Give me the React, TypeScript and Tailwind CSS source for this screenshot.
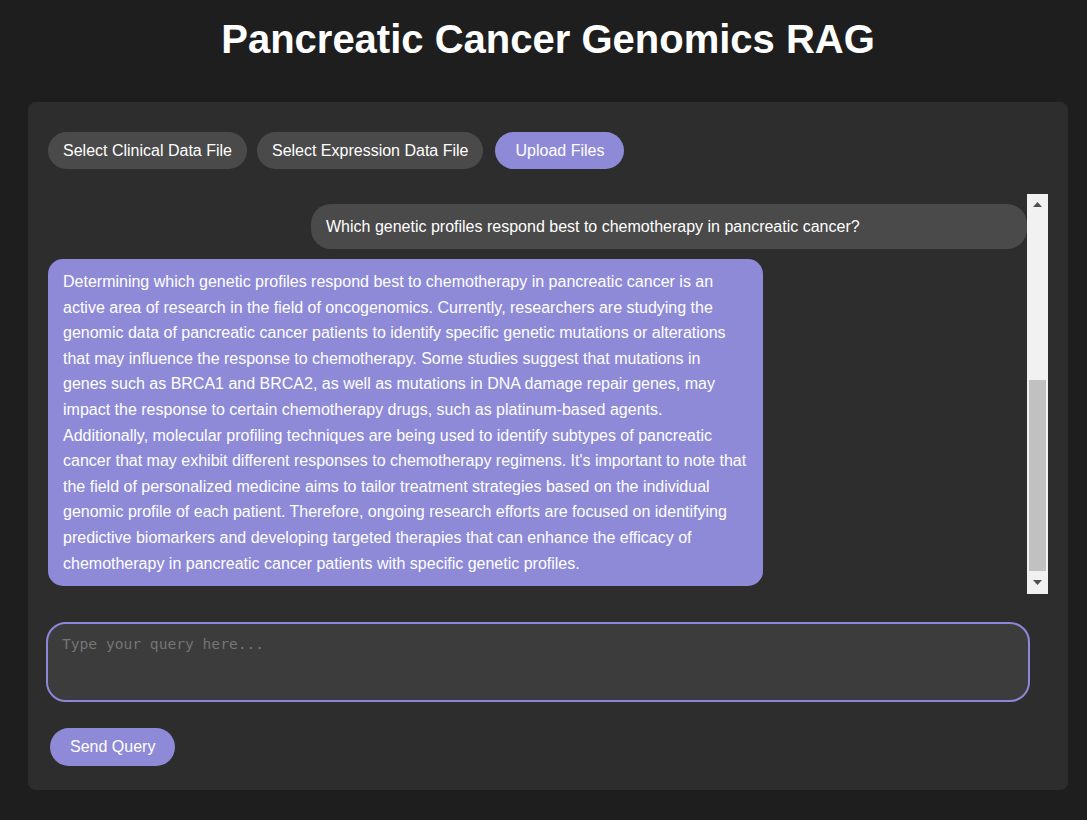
import React, { useState } from "react";

const answer =
  "Determining which genetic profiles respond best to chemotherapy in pancreatic cancer is an active area of research in the field of oncogenomics. Currently, researchers are studying the genomic data of pancreatic cancer patients to identify specific genetic mutations or alterations that may influence the response to chemotherapy. Some studies suggest that mutations in genes such as BRCA1 and BRCA2, as well as mutations in DNA damage repair genes, may impact the response to certain chemotherapy drugs, such as platinum-based agents. Additionally, molecular profiling techniques are being used to identify subtypes of pancreatic cancer that may exhibit different responses to chemotherapy regimens. It's important to note that the field of personalized medicine aims to tailor treatment strategies based on the individual genomic profile of each patient. Therefore, ongoing research efforts are focused on identifying predictive biomarkers and developing targeted therapies that can enhance the efficacy of chemotherapy in pancreatic cancer patients with specific genetic profiles.";

function Arrow({ down }: { down?: boolean }) {
  return (
    <svg width="9" height="5" viewBox="0 0 9 5">
      {down ? (
        <polygon points="0,0 9,0 4.5,5" fill="#505050" />
      ) : (
        <polygon points="0,5 9,5 4.5,0" fill="#505050" />
      )}
    </svg>
  );
}

export default function App() {
  const [query, setQuery] = useState("");
  const messages = [
    { id: 1, role: "user", text: "Which genetic profiles respond best to chemotherapy in pancreatic cancer?" },
    { id: 2, role: "bot", text: answer },
  ];

  return (
    <div
      className="min-h-[820px] bg-[#1e1e1e] text-white"
      style={{ fontFamily: '"Liberation Sans", Arial, sans-serif' }}
    >
      <div className="ml-[28px] w-[1040px] pt-[17px]">
        <h1 className="text-center text-[40px] font-bold leading-[45px] mb-[40px]">
          Pancreatic Cancer Genomics RAG
        </h1>

        <div className="bg-[#2d2d2d] rounded-[8px] px-[20px] pt-[30px] pb-[24px]">
          {/* file buttons */}
          <div className="flex items-center h-[37px]">
            <button className="h-[37px] px-[15px] rounded-full bg-[#4a4a4a] text-[16px] text-white">
              Select Clinical Data File
            </button>
            <button className="ml-[10px] h-[37px] px-[15px] rounded-full bg-[#4a4a4a] text-[16px] text-white">
              Select Expression Data File
            </button>
            <button className="ml-[12px] h-[37px] px-[20px] rounded-full bg-[#8e8ad8] text-[16px] text-white">
              Upload Files
            </button>
          </div>

          {/* chat */}
          <div className="mt-[25px] flex h-[400px]">
            <div className="w-[979px] overflow-hidden flex flex-col gap-[10px] pt-[10px]">
              {messages.map((m) =>
                m.role === "user" ? (
                  <div
                    key={m.id}
                    className="self-end w-[716px] bg-[#4a4a4a] rounded-[20px] px-[15px] py-[10px] text-[16px] leading-[25px]"
                  >
                    {m.text}
                  </div>
                ) : (
                  <div
                    key={m.id}
                    className="self-start w-[714.5px] bg-[#8e8ad8] rounded-[15px] px-[15px] py-[10px] text-[16px] leading-[25.6px]"
                  >
                    {m.text}
                  </div>
                )
              )}
            </div>
            <div className="w-[21px] bg-[#f1f1f1] flex flex-col">
              <div className="h-[20px] flex items-center justify-center">
                <Arrow />
              </div>
              <div className="flex-1" />
              <div className="h-[191px] mx-[2px] bg-[#c1c1c1]" />
              <div className="h-[23px] flex items-center justify-center">
                <Arrow down />
              </div>
            </div>
          </div>

          {/* query */}
          <textarea
            value={query}
            onChange={(e) => setQuery(e.target.value)}
            placeholder="Type your query here..."
            className="mt-[28px] -ml-[2px] block w-[984px] h-[80px] resize-none rounded-[20px] border-2 border-[#8b88d8] bg-[#3c3c3c] px-[14px] pt-[9px] text-[14.6px] text-white placeholder:text-[#757575] outline-none"
            style={{ fontFamily: '"DejaVu Sans Mono", "Liberation Mono", monospace' }}
          />

          <button className="mt-[26px] ml-[2px] h-[38px] px-[20px] rounded-full bg-[#8e8ad8] text-[16px] text-white">
            Send Query
          </button>
        </div>
      </div>
    </div>
  );
}
